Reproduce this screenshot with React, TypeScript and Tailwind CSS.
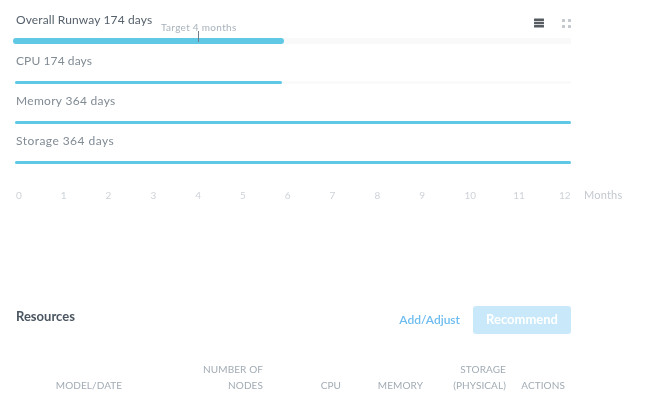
export default function App() {
  const ticks = [
    { t: "0", w: "w-[45px]" },
    { t: "1", w: "w-[45px]" },
    { t: "2", w: "w-[45px]" },
    { t: "3", w: "w-[45px]" },
    { t: "4", w: "w-[45px]" },
    { t: "5", w: "w-[45px]" },
    { t: "6", w: "w-[45px]" },
    { t: "7", w: "w-[45px]" },
    { t: "8", w: "w-[45px]" },
    { t: "9", w: "w-[45.5px]" },
    { t: "10", w: "w-[49px]" },
    { t: "11", w: "w-[46px]" },
    { t: "12", w: "w-[12px]" },
  ];
  const rows = [
    { label: "CPU 174 days", width: "w-[267px]", track: "tracking-[0.1px]" },
    { label: "Memory 364 days", width: "w-full", track: "tracking-[0.3px]" },
    { label: "Storage 364 days", width: "w-full", track: "tracking-[0.45px]" },
  ];
  return (
    <div className="w-[647px] h-[402px] overflow-hidden bg-white font-['Lato','Liberation_Sans',sans-serif] blur-[0.7px]">
      <div className="pl-[15px] pt-[12px] w-[571px]">
        <div className="flex items-center justify-between h-[16px]">
          <span className="pl-px text-[12px] leading-[16px] text-[#56616c] tracking-[0.12px]">Overall Runway 174 days</span>
          <div className="flex items-center gap-[18px] mt-[6px]">
            <svg width="10" height="10" viewBox="0 0 10 10" fill="#555b60">
              <rect x="0" y="0.5" width="10" height="2.4" rx="0.5" />
              <rect x="0" y="3.8" width="10" height="2.4" rx="0.5" />
              <rect x="0" y="7.1" width="10" height="2.4" rx="0.5" />
            </svg>
            <svg width="9" height="9" viewBox="0 0 9 9" fill="#c3c8ce">
              <rect x="0" y="0" width="3" height="3" rx="0.5" />
              <rect x="6" y="0" width="3" height="3" rx="0.5" />
              <rect x="0" y="6" width="3" height="3" rx="0.5" />
              <rect x="6" y="6" width="3" height="3" rx="0.5" />
            </svg>
          </div>
        </div>
        <div className="relative mt-[10px] -ml-[2px] h-[6px] bg-[#f9f9f9]">
          <div className="h-[6px] w-[271px] rounded-full bg-[#5fc9e5]" />
          <span className="absolute left-[148px] -top-[17px] text-[10px] leading-[12px] text-[#a9b2bb] tracking-[0.3px] whitespace-nowrap">
            Target 4 months
          </span>
          <div className="absolute left-[185px] -top-[7px] w-px h-[11px] bg-[#6f7b85]" />
        </div>
        {rows.map((r) => (
          <div key={r.label} className="mt-[9px]">
            <div className={`pl-px text-[12px] leading-[16px] text-[#818b94] ${r.track}`}>{r.label}</div>
            <div className="mt-[12px] h-[3px] bg-[#fafafa]">
              <div className={`h-[3px] rounded-full bg-[#5fc9e5] ${r.width}`} />
            </div>
          </div>
        ))}
        <div className="relative mt-[25px] flex pl-px text-[10px] leading-[12px] text-[#ced3d8]">
          {ticks.map((t) => (
            <span key={t.t} className={t.w}>{t.t}</span>
          ))}
          <span className="absolute left-[569px] -top-px text-[11px] leading-[14px] text-[#c3c9cf] tracking-[0.2px]">Months</span>
        </div>
        <div className="mt-[105px] flex items-center justify-between h-[28px]">
          <span className="pl-px -mt-[7px] text-[13px] font-bold text-[#4a5560]">Resources</span>
          <div className="flex items-center gap-[13px]">
            <span className="text-[12px] font-semibold text-[#6cbcf0]">Add/Adjust</span>
            <button className="w-[98px] h-[28px] rounded-[3px] bg-[#c9e9fa] text-[13px] font-bold text-white">Recommend</button>
          </div>
        </div>
        <div className="mt-[27px] grid grid-cols-[148px_100px_79px_81px_83px_59px] items-end text-[10px] leading-[16px] text-[#a2abb4] tracking-[0.1px]">
          <span className="text-center">MODEL/DATE</span>
          <span className="text-right">NUMBER OF<br />NODES</span>
          <span className="text-right pr-[1px]">CPU</span>
          <span className="text-right">MEMORY</span>
          <span className="text-right">STORAGE<br />(PHYSICAL)</span>
          <span className="text-right">ACTIONS</span>
        </div>
      </div>
    </div>
  );
}
